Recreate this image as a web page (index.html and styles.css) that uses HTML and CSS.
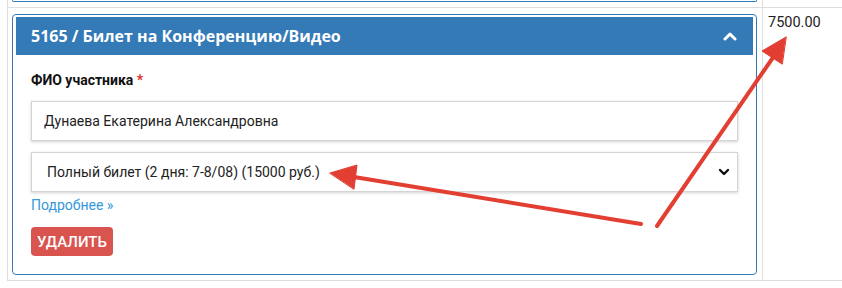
FILE: index.html
```html
<!DOCTYPE html>
<html lang="ru">
<head>
  <meta charset="UTF-8">
  <meta name="viewport" content="width=device-width, initial-scale=1.0">
  <title>Корзина</title>
  <link rel="stylesheet" href="styles.css">
</head>
<body>
  <div class="cart">
    <div class="row row-prev">
      <div class="cell cell-item">
        <div class="panel-tail"></div>
      </div>
      <div class="cell cell-price"></div>
    </div>

    <div class="row">
      <div class="cell cell-item">
        <div class="panel">
          <div class="panel-head">
            <span class="panel-title">5165 / Билет на Конференцию/Видео</span>
            <svg class="caret-up" width="14" height="9" viewBox="0 0 14 9">
              <path d="M2 7 L7 2 L12 7" fill="none" stroke="#fff" stroke-width="3" stroke-linecap="round" stroke-linejoin="round"/>
            </svg>
          </div>
          <div class="panel-body">
            <div class="label">ФИО участника <span class="req">*</span></div>
            <input class="field" type="text" value="Дунаева Екатерина Александровна">
            <div class="select-wrap">
              <select class="field field-select">
                <option>Полный билет (2 дня: 7-8/08) (15000 руб.)</option>
              </select>
              <svg class="caret-down" width="12" height="8" viewBox="0 0 12 8">
                <path d="M2 2 L6 6 L10 2" fill="none" stroke="#111" stroke-width="2.4" stroke-linecap="round" stroke-linejoin="round"/>
              </svg>
            </div>
            <a class="more" href="javascript:;">Подробнее »</a>
            <button class="btn-del" type="button">Удалить</button>
          </div>
        </div>
      </div>
      <div class="cell cell-price">7500.00</div>
    </div>
  </div>

  <!-- стрелки поверх скриншота -->
  <svg class="arrows" width="842" height="288" viewBox="0 0 842 288">
    <g fill="#e23e31" stroke="#e23e31" stroke-width="4" stroke-linecap="round">
      <line x1="657" y1="226" x2="774" y2="56"/>
      <polygon stroke-width="1" points="786,37 762,51 782,64"/>
      <line x1="641" y1="224" x2="354" y2="177"/>
      <polygon stroke-width="1" points="330,173 357,165 354,189"/>
    </g>
  </svg>
</body>
</html>
```

FILE: styles.css
```css
html, body {
  margin: 0;
  padding: 0;
  background: #fff;
  overflow: hidden;
}
body {
  font-family: Roboto, "Noto Sans", sans-serif;
  font-size: 14px;
  line-height: 20px;
  color: #333;
  position: relative;
  width: 842px;
  height: 288px;
}
.cart {
  margin-left: 7px;
}
.row {
  display: flex;
  border-bottom: 1px solid #ddd;
}
.cell {
  box-sizing: border-box;
}
.cell-item {
  width: 756px;
  border-left: 1px solid #ddd;
  border-right: 1px solid #ddd;
  padding: 6px 5px 5px 4px;
}
.cell-price {
  flex: 1;
  padding: 5px 5px 0;
  font-size: 14.5px;
  color: #222;
}
.row-prev .cell-item {
  padding: 0 5px 5px 4px;
}
.panel-tail {
  height: 1px;
  border: 1px solid #337ab7;
  border-top: none;
  border-radius: 0 0 4px 4px;
}
.panel {
  border: 1px solid #337ab7;
  border-radius: 4px;
  padding: 2px 3px 0;
}
.panel-head {
  height: 38px;
  background: #337ab7;
  display: flex;
  align-items: center;
  justify-content: space-between;
  padding: 0 16px 0 15px;
}
.panel-title {
  font-family: "Open Sans", sans-serif;
  font-weight: 700;
  font-size: 16px;
  color: #fff;
}
.panel-body {
  display: flex;
  flex-direction: column;
  align-items: flex-start;
  padding: 15px 15px 18px;
}
.label {
  font-weight: 700;
  color: #111;
  margin-bottom: 11px;
}
.req {
  color: #e0302a;
}
.field {
  box-sizing: border-box;
  width: 100%;
  height: 40px;
  margin: 0;
  border: 1px solid #d4d4d4;
  border-radius: 0;
  background: #fff;
  box-shadow: 0 1px 3px rgba(0, 0, 0, .18);
  font-family: Roboto, sans-serif;
  font-size: 14px;
  color: #222;
  padding: 0 12px;
  outline: none;
}
.select-wrap {
  position: relative;
  width: 100%;
  margin-top: 11px;
}
.field-select {
  -webkit-appearance: none;
  appearance: none;
  padding-left: 15px;
  display: block;
}
.caret-down {
  position: absolute;
  right: 8px;
  top: 16px;
}
.more {
  margin-top: 3px;
  color: #3498db;
  text-decoration: none;
}
.btn-del {
  margin-top: 12px;
  height: 29px;
  padding: 0 6px;
  border: none;
  border-radius: 4px;
  background: #d9534f;
  color: #fff;
  font-family: Roboto, sans-serif;
  font-size: 15px;
  font-weight: 500;
  text-transform: uppercase;
}
.arrows {
  position: absolute;
  top: 0;
  left: 0;
  pointer-events: none;
}
```
